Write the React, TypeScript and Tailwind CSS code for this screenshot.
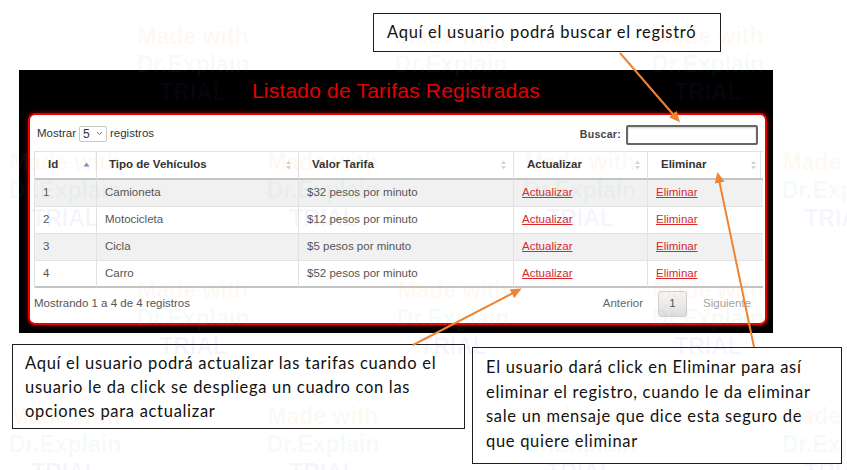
const rows = [
  { id: 1, tipo: 'Camioneta', valor: '$32 pesos por minuto' },
  { id: 2, tipo: 'Motocicleta', valor: '$12 pesos por minuto' },
  { id: 3, tipo: 'Cicla', valor: '$5 pesos por minuto' },
  { id: 4, tipo: 'Carro', valor: '$52 pesos por minuto' },
]

// watermark tiles left by the trial version of the screenshot tool
const marks = [
  [130, 22], [388, 22], [645, 22],
  [2, 148], [260, 148], [517, 148], [775, 148],
  [130, 276], [390, 276], [645, 276],
  [2, 402], [260, 402], [517, 402], [775, 402],
]

const note = { fontFamily: 'Lato, "Open Sans", sans-serif' }

function SortIcon({ active }: { active?: boolean }) {
  if (active) {
    return (
      <svg className="w-[7px] h-[10px]" viewBox="0 0 7 10">
        <path d="M0.5 6.5L3.5 2.5L6.5 6.5Z" fill="#7d86d6" />
      </svg>
    )
  }
  return (
    <svg className="w-[7px] h-[12px]" viewBox="0 0 7 12">
      <path d="M1 5L3.5 1.5L6 5Z" fill="#d4d4d4" />
      <path d="M1 7L3.5 10.5L6 7Z" fill="#d4d4d4" />
    </svg>
  )
}

function HeaderCell({ label, active, pl = 'pl-[12px]', last }: { label: string; active?: boolean; pl?: string; last?: boolean }) {
  return (
    <div className={`h-[29px] flex items-center justify-between ${pl} pr-[6px] border-t border-b-2 border-t-[#e2e2e2] border-b-[#c4c4c4] ${last ? '' : 'border-r border-r-[#e2e2e2]'} font-bold text-[#333] text-[11.5px]`}>
      <span>{label}</span>
      <SortIcon active={active} />
    </div>
  )
}

export default function App() {
  return (
    <div className="relative w-[847px] h-[470px] overflow-hidden bg-white" style={{ fontFamily: '"Liberation Sans", Arial, sans-serif' }}>
      <div className="pt-[70px] pl-[19px]">
        <div className="w-[754px] h-[263px] bg-black flex flex-col">
          <div className="h-[43px] flex justify-center pt-[8px] text-[21px] leading-[25px] text-[#e40000] tracking-[0.2px]">
            Listado de Tarifas Registradas
          </div>
          <div className="ml-[9px] w-[739px] h-[212px] bg-white rounded-[7px] border-2 border-[#e60000] shadow-[0_0_5px_rgba(255,0,0,0.55)] px-[4px] flex flex-col">
            <div className="h-[36px] flex items-center justify-between pl-[3px] pr-[3px] pt-[1px]">
              <div className="flex items-center gap-[3px] text-[11.5px] text-[#333]">
                <span>Mostrar</span>
                <div className="w-[28px] h-[16px] border border-[#c8c8c8] rounded-[2px] flex items-center justify-between px-[3px]">
                  <span className="text-[12px] leading-none">5</span>
                  <svg className="w-[7px] h-[5px]" viewBox="0 0 7 5">
                    <path d="M1 1L3.5 3.5L6 1" stroke="#777" strokeWidth="1" fill="none" />
                  </svg>
                </div>
                <span>registros</span>
              </div>
              <div className="flex items-center gap-[5px] mt-[3px]">
                <span className="text-[10.5px] font-bold text-[#444] tracking-[0.3px]">Buscar:</span>
                <div className="w-[132px] h-[20px] border-2 border-[#666] rounded-[2px] shadow-[inset_0_1px_2px_rgba(0,0,0,0.2)]" />
              </div>
            </div>
            <div className="grid grid-cols-[62px_202px_215px_134px_115px] border-l border-r border-[#e2e2e2]">
              <HeaderCell label="Id" active pl="pl-[13px]" />
              <HeaderCell label="Tipo de Vehículos" />
              <HeaderCell label="Valor Tarifa" pl="pl-[13px]" />
              <HeaderCell label="Actualizar" pl="pl-[13px]" />
              <HeaderCell label="Eliminar" pl="pl-[13px]" last />
              {rows.map((r, i) => {
                const bg = i % 2 === 0 ? 'bg-[#f1f1f1]' : 'bg-white'
                const bb = i === rows.length - 1 ? 'border-b-2 border-b-[#c4c4c4]' : 'border-b border-b-[#e2e2e2]'
                const cell = `h-[27px] flex items-center pl-[8px] text-[11.5px] text-[#555] ${bg} ${bb}`
                return [
                  <div key={`a${r.id}`} className={`${cell} border-r border-r-[#e2e2e2]`}>{r.id}</div>,
                  <div key={`b${r.id}`} className={`${cell} border-r border-r-[#e2e2e2]`}>{r.tipo}</div>,
                  <div key={`c${r.id}`} className={`${cell} border-r border-r-[#e2e2e2]`}>{r.valor}</div>,
                  <div key={`d${r.id}`} className={`${cell} border-r border-r-[#e2e2e2]`}>
                    <a className="text-[#d8272d] underline">Actualizar</a>
                  </div>,
                  <div key={`e${r.id}`} className={cell}>
                    <a className="text-[#d8272d] underline">Eliminar</a>
                  </div>,
                ]
              })}
            </div>
            <div className="flex-1 flex items-center justify-between text-[11.5px]">
              <span className="text-[#555] -mt-[4px]">Mostrando 1 a 4 de 4 registros</span>
              <div className="flex items-center pr-[10px] -mt-[3px]">
                <span className="text-[#666] mr-[15px]">Anterior</span>
                <div className="w-[29px] h-[26px] border border-[#cfcfcf] rounded-[3px] bg-gradient-to-b from-[#f6f6f6] to-[#dedede] flex items-center justify-center text-[#555]">1</div>
                <span className="text-[#a2a2a2] ml-[16px]">Siguiente</span>
              </div>
            </div>
          </div>
        </div>
      </div>

      <div className="absolute left-[373px] top-[13px] w-[348px] h-[39px] bg-white border-[1.5px] border-[#1e1e1e] flex items-center pl-[13px] text-[16.5px] tracking-[0.7px] text-[#111]" style={note}>
        Aquí el usuario podrá buscar el registró
      </div>

      <div className="absolute left-[12px] top-[344px] w-[453px] h-[85px] bg-white border-[1.5px] border-[#1e1e1e] pl-[12px] pt-[6px] text-[16.5px] tracking-[0.7px] leading-[24px] text-[#111]" style={note}>
        <div>Aquí el usuario podrá actualizar las tarifas cuando el</div>
        <div>usuario le da click se despliega un cuadro con las</div>
        <div>opciones para actualizar</div>
      </div>

      <div className="absolute left-[472px] top-[347px] w-[370px] h-[117px] bg-white border-[1.5px] border-[#1e1e1e] pl-[13px] pt-[7px] text-[16.5px] tracking-[0.7px] leading-[24.5px] text-[#111]" style={note}>
        <div>El usuario dará click en Eliminar para así</div>
        <div>eliminar el registro, cuando le da eliminar</div>
        <div>sale un mensaje que dice esta seguro de</div>
        <div>que quiere eliminar</div>
      </div>

      <svg className="absolute inset-0 pointer-events-none" width="847" height="470" viewBox="0 0 847 470">
        <defs>
          <marker id="head" markerWidth="11" markerHeight="10" refX="8" refY="5" orient="auto" markerUnits="userSpaceOnUse">
            <path d="M0 0L11 5L0 10Z" fill="#ee8433" />
          </marker>
        </defs>
        <g stroke="#ee8433" strokeWidth="2" fill="none">
          <line x1="620" y1="53" x2="678" y2="120" markerEnd="url(#head)" />
          <line x1="413" y1="345" x2="519" y2="290" markerEnd="url(#head)" />
          <line x1="754" y1="347" x2="718" y2="175" markerEnd="url(#head)" />
        </g>
      </svg>

      {marks.map(([x, y], i) => (
        <div
          key={i}
          className="absolute pointer-events-none w-[126px] text-center font-bold text-[23px] leading-[28px]"
          style={{ left: x, top: y, fontFamily: '"Liberation Sans", Arial, sans-serif' }}
        >
          <div className="text-[rgba(240,150,60,0.06)]">Made with</div>
          <div className="text-[rgba(80,200,120,0.06)]">Dr.Explain</div>
          <div className="text-[rgba(90,90,230,0.06)]">TRIAL</div>
        </div>
      ))}
    </div>
  )
}
